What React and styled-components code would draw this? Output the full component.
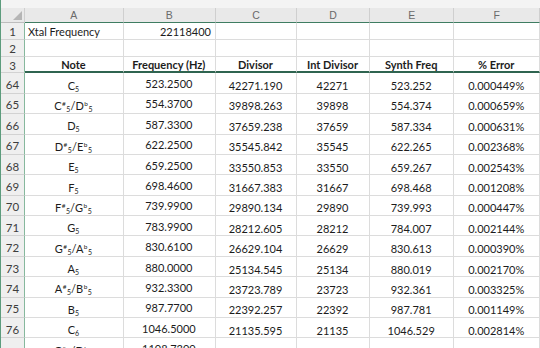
import React from 'react'
import styled, { createGlobalStyle } from 'styled-components'

const COLS = '24px 98.7px 92.3px 81px 73px 84.3px 86px 1fr'

const GlobalStyle = createGlobalStyle`
  html, body {
    margin: 0;
    padding: 0;
    background: #ffffff;
    overflow: hidden;
  }
  * { box-sizing: border-box; }
`

const Sheet = styled.div`
  width: 540px;
  height: 348px;
  overflow: hidden;
  border-left: 1px solid #5d9c7d;
  font-family: Lato, "Liberation Sans", sans-serif;
  font-size: 11px;
  color: #1c1c1c;
  background: #fff;
`

const TopStrip = styled.div`
  height: 8px;
  background: #f4f4f4;
`

const Row = styled.div`
  display: grid;
  grid-template-columns: ${COLS};
  height: ${p => p.$h}px;
`

const Corner = styled.div`
  background: #e9e9e9;
  border-right: 1px solid #cfcfcf;
  border-bottom: 1px solid #bdbdbd;
  display: flex;
  align-items: flex-end;
  justify-content: flex-end;
  padding: 0 2px 2px 0;
`

const ColHead = styled.div`
  background: #e9e9e9;
  border-right: 1px solid #cfcfcf;
  border-bottom: 1.5px solid #3f7d62;
  color: #6a6a6a;
  font-family: "Liberation Sans", Arial, sans-serif;
  font-size: 10.5px;
  display: flex;
  align-items: center;
  justify-content: center;
`

const RowHead = styled.div`
  background: #efefef;
  border-right: 1px solid #86b89d;
  border-bottom: 1px solid #d2d2d2;
  color: #3d3d3d;
  font-size: 11.5px;
  display: flex;
  align-items: center;
  justify-content: center;
  padding-top: ${p => p.$pt ?? 2}px;
`

const Cell = styled.div`
  border-right: 1px solid #dcdcdc;
  border-bottom: ${p => (p.$divider ? '2px solid #2f6450' : '1px solid #dcdcdc')};
  display: flex;
  align-items: center;
  justify-content: ${p => p.$align || 'center'};
  padding: ${p => p.$pt ?? 3}px 4px 0 3px;
  font-weight: ${p => (p.$bold ? 700 : 400)};
  white-space: nowrap;
  overflow: visible;
`

const Sup = styled.sup`
  font-size: 6.5px;
  vertical-align: 4px;
  line-height: 0;
  margin: 0 0.5px;
`

const Sub = styled.sub`
  font-size: 7px;
  vertical-align: -2px;
  line-height: 0;
`

const Note = ({ name, oct }) => {
  const parts = name.split('/')
  return (
    <span>
      {parts.map((p, i) => (
        <React.Fragment key={i}>
          {i > 0 && '/'}
          {p[0]}
          {p[1] && <Sup>{p[1]}</Sup>}
          <Sub>{oct}</Sub>
        </React.Fragment>
      ))}
    </span>
  )
}

const rows = [
  [64, 'C', 5, '523.2500', '42271.190', '42271', '523.252', '0.000449%'],
  [65, 'C#/Db', 5, '554.3700', '39898.263', '39898', '554.374', '0.000659%'],
  [66, 'D', 5, '587.3300', '37659.238', '37659', '587.334', '0.000631%'],
  [67, 'D#/Eb', 5, '622.2500', '35545.842', '35545', '622.265', '0.002368%'],
  [68, 'E', 5, '659.2500', '33550.853', '33550', '659.267', '0.002543%'],
  [69, 'F', 5, '698.4600', '31667.383', '31667', '698.468', '0.001208%'],
  [70, 'F#/Gb', 5, '739.9900', '29890.134', '29890', '739.993', '0.000447%'],
  [71, 'G', 5, '783.9900', '28212.605', '28212', '784.007', '0.002144%'],
  [72, 'G#/Ab', 5, '830.6100', '26629.104', '26629', '830.613', '0.000390%'],
  [73, 'A', 5, '880.0000', '25134.545', '25134', '880.019', '0.002170%'],
  [74, 'A#/Bb', 5, '932.3300', '23723.789', '23723', '932.361', '0.003325%'],
  [75, 'B', 5, '987.7700', '22392.257', '22392', '987.781', '0.001149%'],
  [76, 'C', 6, '1046.5000', '21135.595', '21135', '1046.529', '0.002814%'],
]

const letters = ['A', 'B', 'C', 'D', 'E', 'F', '']

export default function App() {
  return (
    <>
      <GlobalStyle />
      <Sheet>
        <TopStrip />
        <Row $h={14.7}>
          <Corner>
            <svg width="9" height="9" viewBox="0 0 9 9">
              <polygon points="9,0 9,9 0,9" fill="#b5b5b5" />
            </svg>
          </Corner>
          {letters.map((l, i) => (
            <ColHead key={i}>{l}</ColHead>
          ))}
        </Row>
        <Row $h={17.3}>
          <RowHead>1</RowHead>
          <Cell $align="flex-start" $pt={2}>Xtal Frequency</Cell>
          <Cell $align="flex-end" $pt={2}>22118400</Cell>
          <Cell /><Cell /><Cell /><Cell /><Cell />
        </Row>
        <Row $h={16.7}>
          <RowHead>2</RowHead>
          <Cell /><Cell /><Cell /><Cell /><Cell /><Cell /><Cell />
        </Row>
        <Row $h={16.7}>
          <RowHead>3</RowHead>
          {['Note', 'Frequency (Hz)', 'Divisor', 'Int Divisor', 'Synth Freq', '% Error'].map(h => (
            <Cell key={h} $bold $divider $pt={1}>{h}</Cell>
          ))}
          <Cell $divider />
        </Row>
        {rows.map(([n, name, oct, freq, div, idiv, synth, err]) => (
          <Row key={n} $h={20.4}>
            <RowHead $pt={3}>{n}</RowHead>
            <Cell $pt={4}><Note name={name} oct={oct} /></Cell>
            <Cell $pt={1}>{freq}</Cell>
            <Cell $pt={5}>{div}</Cell>
            <Cell $pt={5}>{idiv}</Cell>
            <Cell $pt={5}>{synth}</Cell>
            <Cell $pt={5}>{err}</Cell>
            <Cell />
          </Row>
        ))}
        <Row $h={20.4}>
          <RowHead />
          <Cell $pt={4}><Note name="C#/Db" oct={6} /></Cell>
          <Cell $pt={1}>1108.7300</Cell>
          <Cell /><Cell /><Cell /><Cell /><Cell />
        </Row>
      </Sheet>
    </>
  )
}
